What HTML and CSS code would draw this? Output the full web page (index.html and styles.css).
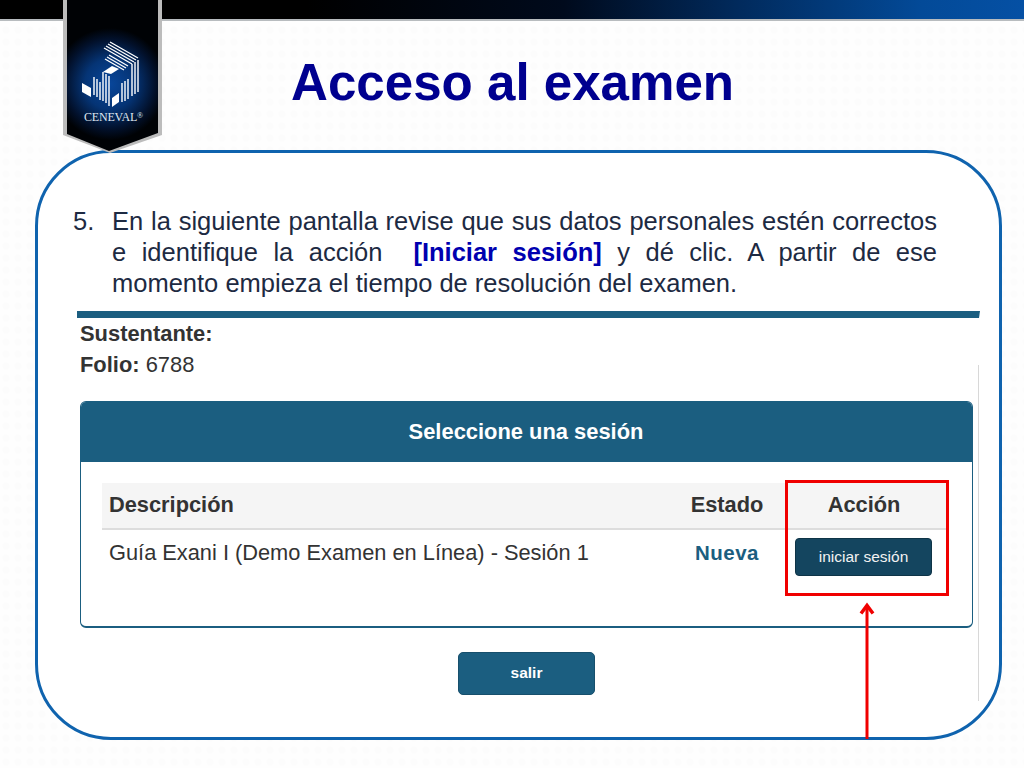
FILE: index.html
```html
<!DOCTYPE html>
<html lang="es">
<head>
<meta charset="utf-8">
<title>Acceso al examen</title>
<link rel="stylesheet" href="styles.css">
</head>
<body>
<div class="slide">
  <header class="topbar"></header>
  <div class="badge">
    <svg class="badge-shape" width="100" height="153" viewBox="0 0 100 153">
      <defs>
        <radialGradient id="glow" gradientUnits="userSpaceOnUse" cx="48" cy="84" r="56">
          <stop offset="0" stop-color="#08469a"/>
          <stop offset="0.45" stop-color="#053475"/>
          <stop offset="0.8" stop-color="#02112c"/>
          <stop offset="1" stop-color="#000205"/>
        </radialGradient>
      </defs>
      <polygon points="1,0 100,0 100,135 48,153 1,135" fill="#bcbcbc"/>
      <polygon points="5,0 96,0 96,133 47,151 5,134" fill="url(#glow)"/>
      <g fill="none" stroke="#fff" stroke-width="1.3">
        <path d="M48 42L76 58M46 44L74 60M44 46L72 62M42 48L70 64"/>
        <path d="M47 55L66 66M45 57L64 68M43 59L62 70"/>
      </g>
      <g fill="#fff">
        <polygon points="41,72 50,66 57,69 49,74"/>
        <polygon points="20,83 29,88 29,97 20,92"/>
        <polygon points="50,98 57,93 57,102 50,107"/>
      </g>
      <g fill="none" stroke="#fff" stroke-width="1.4">
        <path d="M32 77V95M35 79V97M38 82V100"/>
        <path d="M41 72V101M44 74V103M47 76V106"/>
        <path d="M60 83V102M63 81V101M66 79V99"/>
        <path d="M70 64V96M73 62V94M76 60V92"/>
      </g>
    </svg>
    <div class="badge-name">CENEVAL<sup class="reg">®</sup></div>
  </div>

  <h1 class="title">Acceso al examen</h1>

  <main class="panel">
    <div class="step">
      <span class="step-num">5.</span>
      <p class="step-text">En la siguiente pantalla revise que sus datos personales estén correctos e identifique la acción&nbsp; <b class="hl">[Iniciar sesión]</b> y dé clic. A partir de ese momento empieza el tiempo de resolución del examen.</p>
    </div>

    <section class="shot">
      <p class="info"><b>Sustentante:</b></p>
      <p class="info"><b>Folio:</b> 6788</p>

      <div class="card">
        <div class="card-head">Seleccione una sesión</div>
        <div class="card-body">
          <div class="row row-head">
            <div class="c-desc">Descripción</div>
            <div class="c-state">Estado</div>
            <div class="c-action">Acción</div>
          </div>
          <div class="row row-data">
            <div class="c-desc">Guía Exani I (Demo Examen en Línea) - Sesión 1</div>
            <div class="c-state nueva">Nueva</div>
            <div class="c-action"><span class="btn-start">iniciar sesión</span></div>
          </div>
          <div class="highlight"></div>
        </div>
      </div>

      <div class="exit-wrap"><span class="btn-exit">salir</span></div>
    </section>

    <svg class="arrow" width="20" height="138" viewBox="0 0 20 138">
      <path d="M10 137V4" fill="none" stroke="#f00000" stroke-width="3"/>
      <path d="M4 11.5L10 3.5L16 11.5" fill="none" stroke="#f00000" stroke-width="3.5"/>
    </svg>
  </main>
</div>
</body>
</html>
```
FILE: styles.css
```css
* { box-sizing: border-box; }
html, body { margin: 0; padding: 0; }
body { width: 1024px; height: 768px; overflow: hidden; font-family: "Liberation Sans", Arial, sans-serif; background: #fff; }

.slide {
  position: relative;
  width: 1024px;
  height: 768px;
  overflow: hidden;
  background-color: #fefefe;
  background-image: radial-gradient(circle at 50% 50%, #fcfcfc 0 3px, transparent 4px);
  background-size: 12px 12px;
}

.topbar {
  height: 21px;
  background: linear-gradient(90deg, #000 0, #000 30%, #000a1c 55%, #012a5c 72%, #034a98 90%, #0550a4 100%);
  border-bottom: 2px solid #b8bcbf;
}

.badge {
  position: absolute;
  left: 62px;
  top: 0;
  width: 100px;
  height: 153px;
  z-index: 3;
}
.badge-shape { display: block; position: absolute; left: 0; top: 0; }
.badge-name {
  position: absolute;
  left: 0;
  width: 100%;
  top: 109px;
  text-align: center;
  color: #dfe6f0;
  font: 12px/16px "Liberation Serif", serif;
  letter-spacing: -0.2px;
  white-space: nowrap;
  padding-left: 3px;
}
.reg { font-size: 8px; line-height: 0; vertical-align: 3px; }

.title {
  margin: 33px 0 0;
  padding-left: 291px;
  font-size: 51.1px;
  line-height: 58px;
  font-weight: bold;
  color: #00008f;
}

.panel {
  position: relative;
  margin: 38px 0 0 35px;
  width: 967px;
  height: 590px;
  background: #fff;
  border: 3px solid #0f63ae;
  border-radius: 76px;
  z-index: 2;
  padding: 53px 0 0 35px;
}

.step { display: flex; width: 864px; color: #1d2a42; font-size: 25.5px; line-height: 31px; }
.step-num { width: 39px; flex: none; }
.step-text { margin: 0; text-align: justify; flex: 1; }
.hl { color: #0000b0; }

.shot {
  width: 903px;
  height: 390px;
  margin: 12px 0 0 4px;
  border-top: 7px solid #1b5e80;
  border-right: 1px solid transparent;
  color: #333;
  padding: 0 6px 0 3px;
  background: linear-gradient(#d8d8d8, #d8d8d8) no-repeat right 47px / 1px 340px;
}
.info { margin: 0; font-size: 21.9px; line-height: 31px; height: 31px; }

.card {
  margin-top: 21px;
  width: 893px;
  height: 227px;
  border: 1px solid #1b5e80;
  border-bottom-width: 2px;
  border-radius: 6px;
  overflow: hidden;
}
.card-head {
  height: 60px;
  background: #1b5e80;
  color: #fff;
  font-size: 21.9px;
  font-weight: bold;
  line-height: 60px;
  text-align: center;
  padding-right: 1px;
}
.card-body { position: relative; padding: 21px 25px 0 21px; }
.row { display: flex; width: 845px; }
.row-head {
  height: 47px;
  align-items: center;
  background: #f5f5f5;
  border-bottom: 2px solid #ddd;
  font-size: 21.8px;
  font-weight: bold;
  padding-bottom: 2px;
}
.row-data { height: 47px; align-items: center; font-size: 21.8px; padding-bottom: 2px; }
.c-desc { flex: 1; padding-left: 7px; }
.c-state { width: 107px; padding-right: 7px; text-align: center; }
.c-action { width: 163px; text-align: center; padding-right: 3px; }
.nueva { color: #1b5e80; font-weight: bold; font-size: 20.5px; letter-spacing: .5px; }
.btn-start {
  display: block;
  width: 137px;
  height: 38px;
  margin: 9px 0 0 11px;
  background: #14455f;
  border: 1px solid #0f3447;
  border-radius: 4px;
  color: #f2f2f2;
  font-size: 15.5px;
  line-height: 36px;
}
.highlight {
  position: absolute;
  left: 704px;
  top: 18px;
  width: 164px;
  height: 116px;
  border: 3px solid #f00000;
}

.exit-wrap { margin-top: 24px; padding-left: 378px; }
.btn-exit {
  display: block;
  width: 137px;
  height: 43px;
  background: #1b5e80;
  border: 1px solid #174f6c;
  border-radius: 5px;
  color: #fff;
  font-size: 15.5px;
  font-weight: bold;
  line-height: 40px;
  text-align: center;
}

.arrow { position: absolute; left: 819px; top: 449px; display: block; }
```
